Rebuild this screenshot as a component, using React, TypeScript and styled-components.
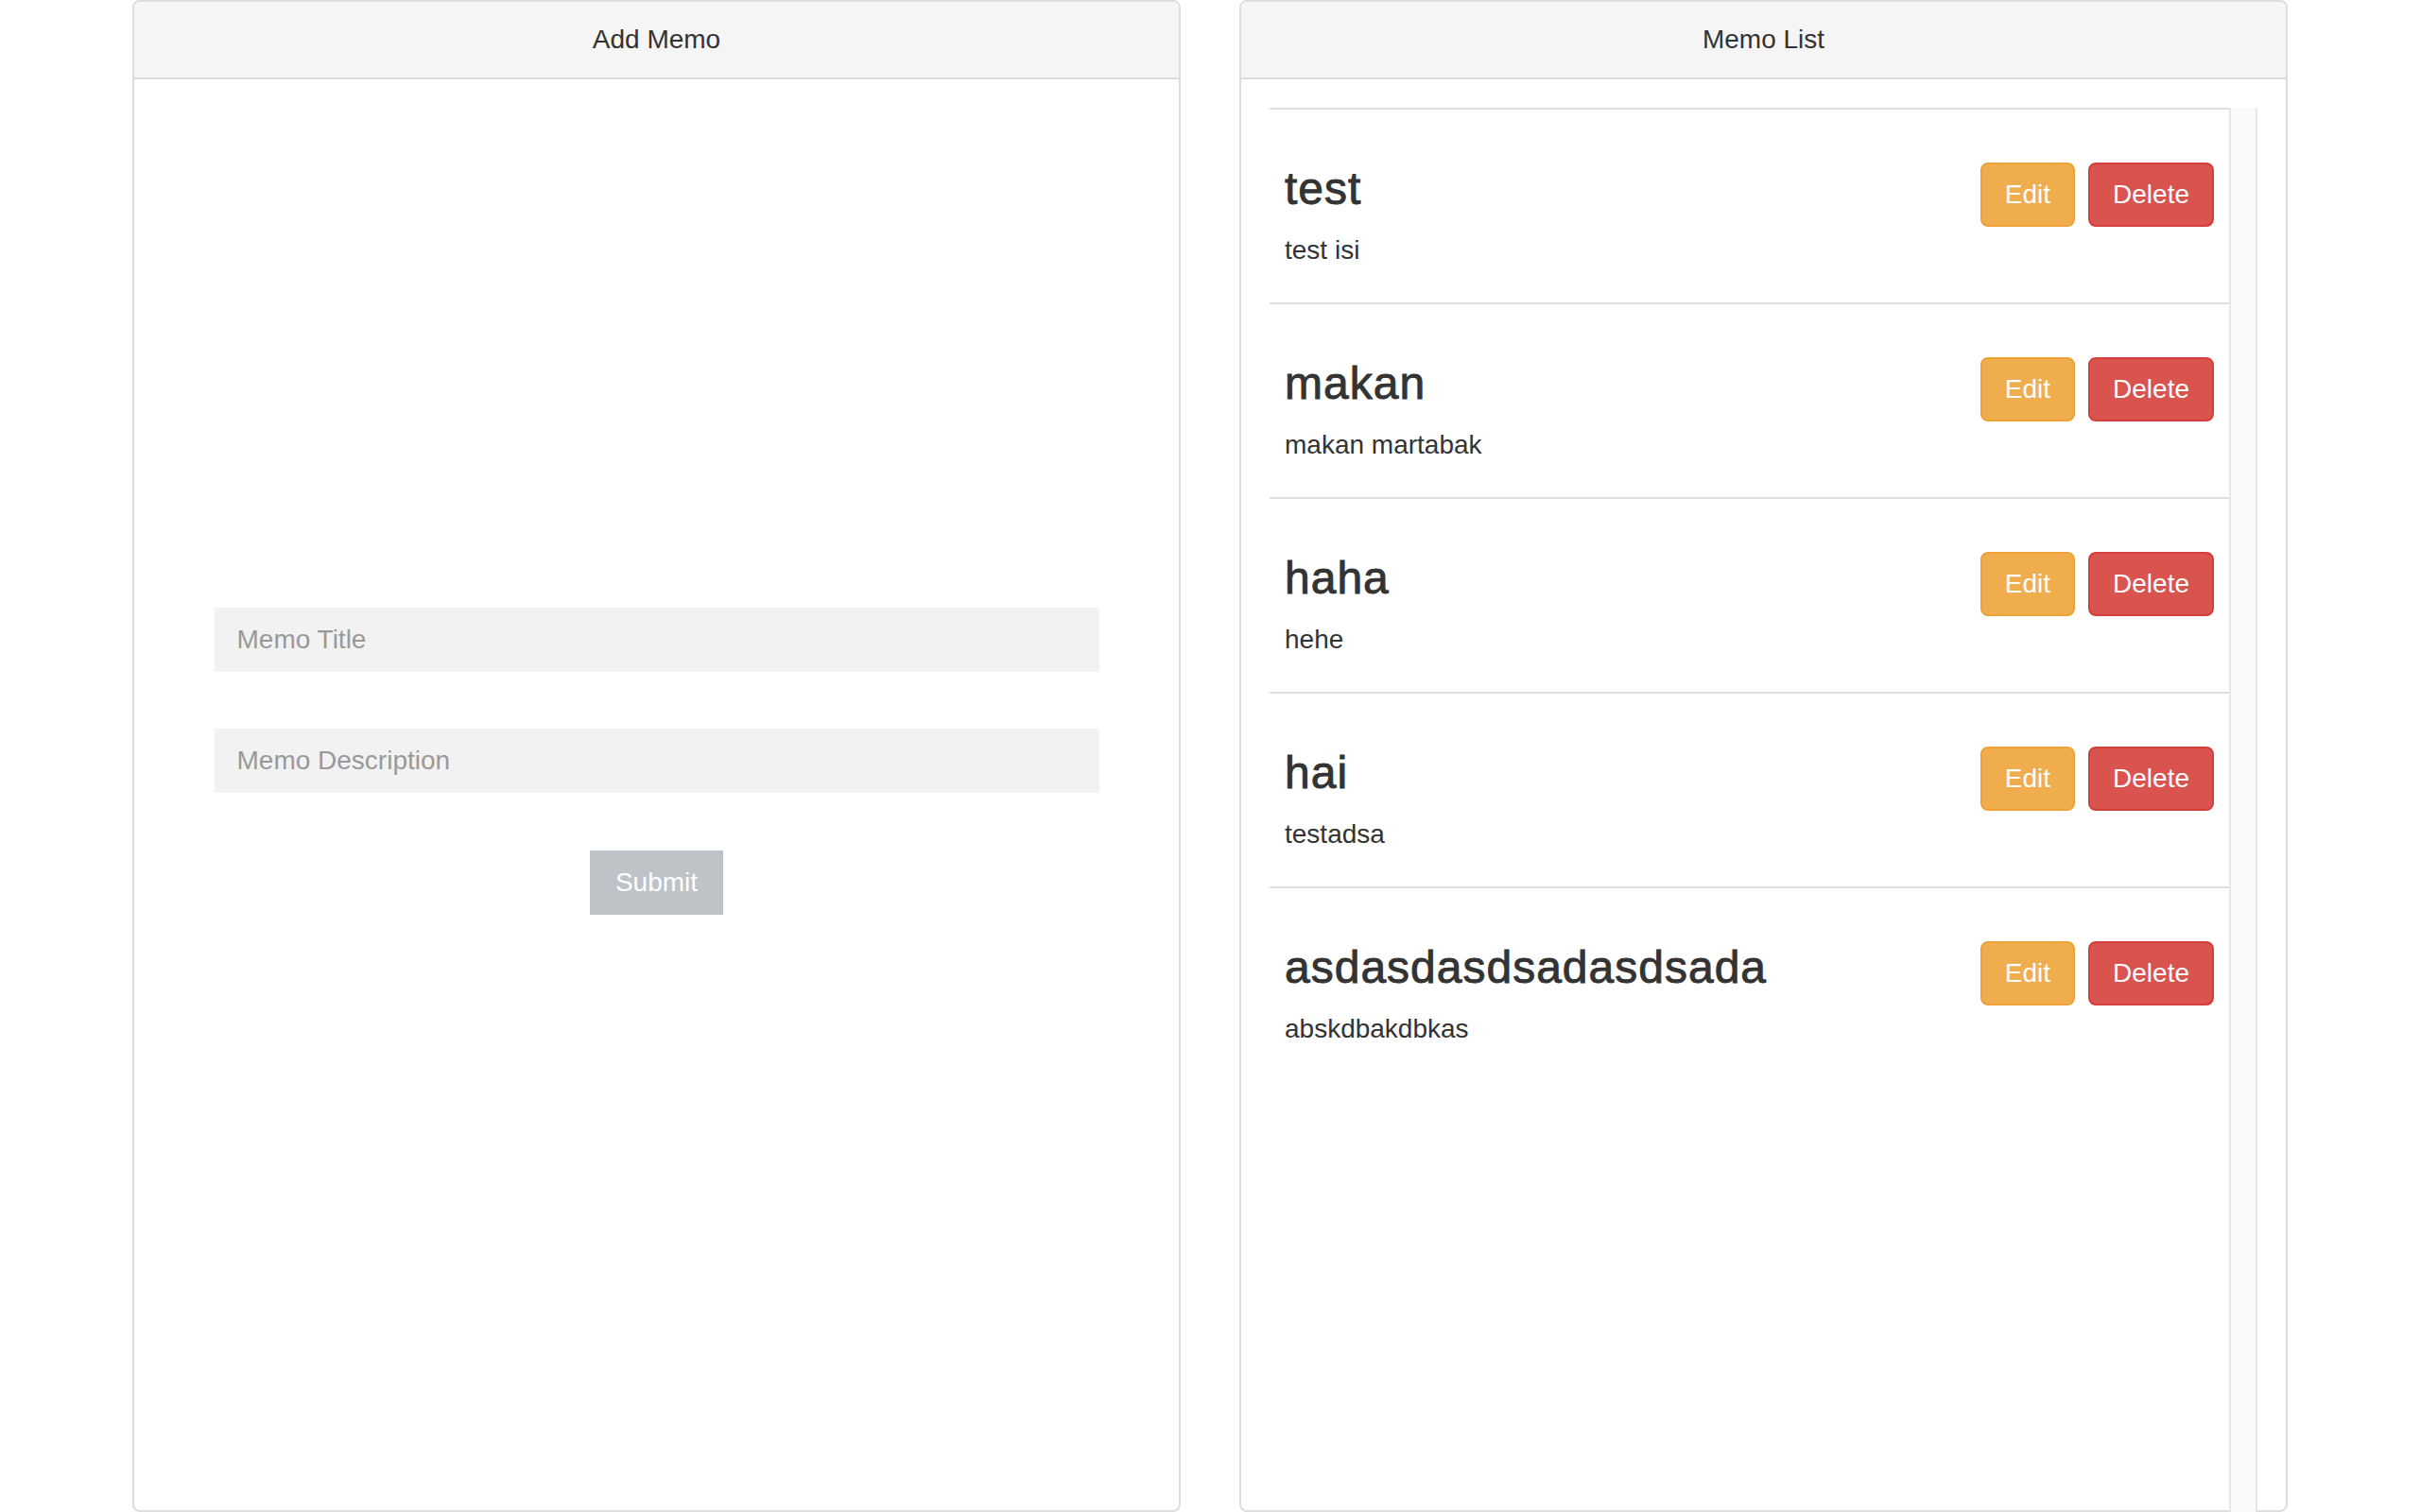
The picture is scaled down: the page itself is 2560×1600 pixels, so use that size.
import React from "react";
import styled, { createGlobalStyle } from "styled-components";

const GlobalStyle = createGlobalStyle`
  html, body {
    margin: 0;
    padding: 0;
    background: #ffffff;
    overflow: hidden;
  }
  body {
    font-family: "Liberation Sans", Arial, Helvetica, sans-serif;
    color: #333333;
  }
  * { box-sizing: border-box; }
`;

const Page = styled.div`
  display: grid;
  grid-template-columns: 1fr 1fr;
  column-gap: 62px;
  padding: 0 140px;
  height: 1600px;
`;

const Panel = styled.section`
  display: flex;
  flex-direction: column;
  height: 1600px;
  border: 2px solid #dddddd;
  border-radius: 8px;
  background: #ffffff;
`;

const PanelHeading = styled.header`
  background: #f5f5f5;
  border-bottom: 2px solid #dddddd;
  border-radius: 6px 6px 0 0;
  padding: 20px 30px;
  font-size: 28px;
  line-height: 40px;
  text-align: center;
  color: #333333;
`;

const FormBody = styled.div`
  flex: 1;
  padding: 559px 30px 30px;
`;

const Form = styled.form`
  width: 936px;
  margin: 0 auto;
  display: flex;
  flex-direction: column;
  gap: 60px;
`;

const Input = styled.input`
  display: block;
  width: 100%;
  height: 68px;
  border: none;
  border-radius: 0;
  background: #f2f2f2;
  padding: 0 24px;
  font-family: "Liberation Sans", Arial, sans-serif;
  font-size: 28px;
  color: #555555;
  outline: none;
  &::placeholder {
    color: #999999;
  }
`;

const SubmitButton = styled.button`
  align-self: center;
  height: 68px;
  margin-top: 1px;
  padding: 0 27px;
  border: none;
  border-radius: 0;
  background: #bdc3c7;
  color: #ffffff;
  font-family: "Liberation Sans", Arial, sans-serif;
  font-size: 28px;
  line-height: 40px;
`;

const ListBody = styled.div`
  flex: 1;
  padding: 30px 30px 0;
`;

const ScrollArea = styled.div`
  display: flex;
  height: 1500px;
`;

const List = styled.ul`
  flex: 1;
  list-style: none;
  margin: 0;
  padding: 0;
`;

const ScrollTrack = styled.div`
  width: 30px;
  flex: none;
  background: #fafafa;
  border-left: 2px solid #e6e6e6;
  border-right: 2px solid #e6e6e6;
`;

const Item = styled.li`
  display: flex;
  justify-content: space-between;
  align-items: flex-start;
  border-top: 2px solid #dddddd;
  padding: 20px 16px 17px;
`;

const ItemText = styled.div`
  min-width: 0;
`;

const Title = styled.h3`
  margin: 37px 0 19px;
  font-size: 48px;
  line-height: 53px;
  font-weight: 400;
  letter-spacing: 1px;
  -webkit-text-stroke: 0.9px #333333;
  color: #333333;
`;

const Description = styled.p`
  margin: 0 0 18px;
  font-size: 28px;
  line-height: 40px;
  color: #333333;
`;

const Actions = styled.div`
  display: flex;
  gap: 14px;
  margin-top: 36px;
`;

const ActionButton = styled.button<{ $variant: "warning" | "danger" }>`
  padding: 12px 24px;
  border: 2px solid ${(p) => (p.$variant === "warning" ? "#eea236" : "#d43f3a")};
  border-radius: 8px;
  background: ${(p) => (p.$variant === "warning" ? "#f0ad4e" : "#d9534f")};
  color: #ffffff;
  font-family: "Liberation Sans", Arial, sans-serif;
  font-size: 28px;
  line-height: 40px;
`;

const memos = [
  { title: "test", description: "test isi" },
  { title: "makan", description: "makan martabak" },
  { title: "haha", description: "hehe" },
  { title: "hai", description: "testadsa" },
  { title: "asdasdasdsadasdsada", description: "abskdbakdbkas" },
];

export default function App() {
  return (
    <>
      <GlobalStyle />
      <Page>
        <Panel>
          <PanelHeading>Add Memo</PanelHeading>
          <FormBody>
            <Form onSubmit={(e) => e.preventDefault()}>
              <Input type="text" placeholder="Memo Title" />
              <Input type="text" placeholder="Memo Description" />
              <SubmitButton type="submit">Submit</SubmitButton>
            </Form>
          </FormBody>
        </Panel>
        <Panel>
          <PanelHeading>Memo List</PanelHeading>
          <ListBody>
            <ScrollArea>
              <List>
                {memos.map((m) => (
                  <Item key={m.title}>
                    <ItemText>
                      <Title>{m.title}</Title>
                      <Description>{m.description}</Description>
                    </ItemText>
                    <Actions>
                      <ActionButton $variant="warning">Edit</ActionButton>
                      <ActionButton $variant="danger">Delete</ActionButton>
                    </Actions>
                  </Item>
                ))}
              </List>
              <ScrollTrack />
            </ScrollArea>
          </ListBody>
        </Panel>
      </Page>
    </>
  );
}
